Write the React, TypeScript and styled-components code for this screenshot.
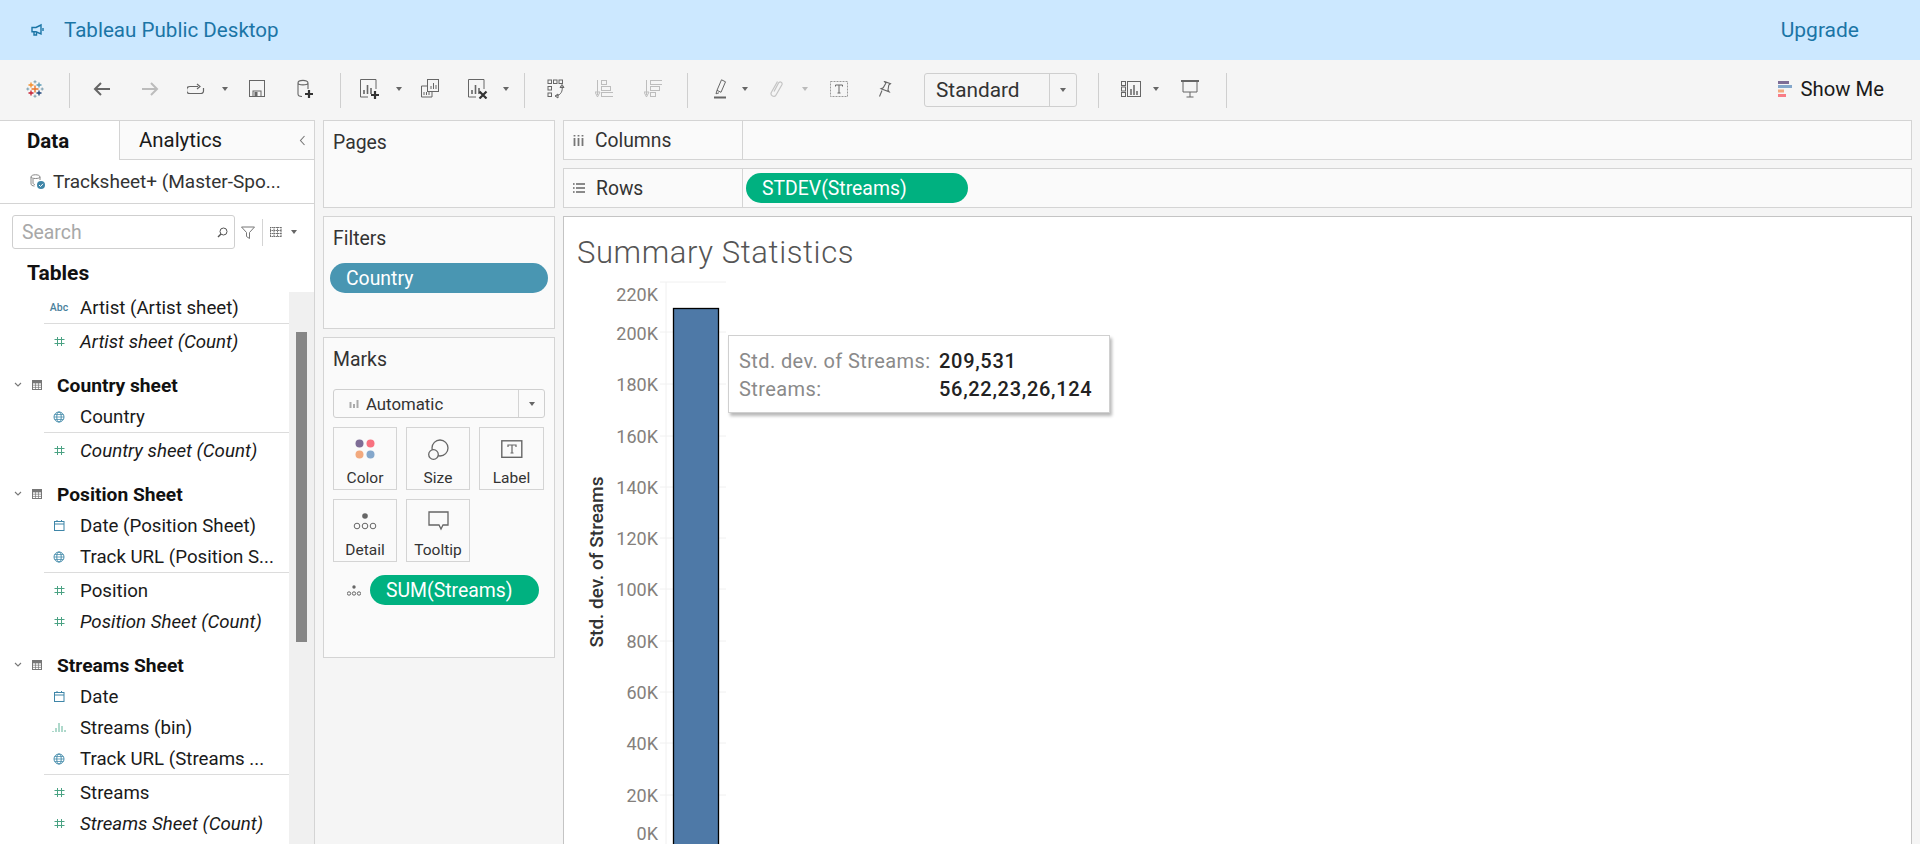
import React from "react";
import styled, { createGlobalStyle } from "styled-components";

const GlobalStyle = createGlobalStyle`
  html, body {
    margin: 0;
    padding: 0;
    background: #f5f5f5;
    font-family: Roboto, "Liberation Sans", sans-serif;
    color: #1a1a1a;
  }
  * { box-sizing: border-box; }
`;

const Page = styled.div`
  width: 1920px;
  height: 844px;
  overflow: hidden;
  display: flex;
  flex-direction: column;
`;

const Banner = styled.div`
  height: 60px;
  background: #cce8ff;
  display: flex;
  align-items: center;
  padding: 0 61px 0 31px;
  color: #1b75a6;
  font-size: 20.6px;
`;

const BannerTitle = styled.span`
  margin-left: 19px;
`;

const Upgrade = styled.span`
  margin-left: auto;
  font-size: 21px;
`;

const Toolbar = styled.div`
  height: 60px;
  background: #f5f5f5;
  display: flex;
  align-items: center;
  padding: 0 36px 0 0;
`;

const ToolSlot = styled.div<{ $ml: number; $w: number }>`
  margin-left: ${(p) => p.$ml}px;
  width: ${(p) => p.$w}px;
  display: flex;
  justify-content: center;
  align-items: center;
  margin-top: -3px;
`;

const ToolSep = styled.div<{ $ml: number }>`
  margin-left: ${(p) => p.$ml}px;
  width: 1px;
  height: 35px;
  background: #cfcfcf;
`;

const Caret = styled.div<{ $light?: boolean }>`
  width: 0;
  height: 0;
  border-left: 3.5px solid transparent;
  border-right: 3.5px solid transparent;
  border-top: 4px solid ${(p) => (p.$light ? "#bbb" : "#666")};
`;

const ModeSelect = styled.div`
  margin-left: 32px;
  width: 153px;
  height: 34px;
  border: 1px solid #cfcfcf;
  border-radius: 3px;
  display: flex;
  align-items: center;
  font-size: 20.8px;
  margin-top: -1px;
`;

const ModeText = styled.span`
  flex: 1;
  padding-left: 11px;
  color: #333;
`;

const ModeArrow = styled.div`
  width: 27px;
  height: 100%;
  border-left: 1px solid #cfcfcf;
  display: flex;
  align-items: center;
  justify-content: center;
`;

const ShowMe = styled.div`
  margin-left: auto;
  display: flex;
  align-items: center;
  gap: 8px;
  font-size: 20.3px;
  margin-top: -3px;
`;

const Body = styled.div`
  flex: 1;
  display: flex;
  min-height: 0;
`;

const Sidebar = styled.div`
  width: 315px;
  background: #fff;
  border-top: 1px solid #d4d4d4;
  border-right: 1px solid #d4d4d4;
  display: flex;
  flex-direction: column;
`;

const Tabs = styled.div`
  height: 39px;
  display: flex;
  align-items: center;
  flex-shrink: 0;
`;

const DataTab = styled.div`
  width: 119px;
  height: 100%;
  padding-left: 27px;
  display: flex;
  align-items: center;
  font-size: 20.5px;
  font-weight: 700;
  color: #111;
`;

const AnalyticsTab = styled.div`
  flex: 1;
  height: 100%;
  padding-left: 19px;
  display: flex;
  align-items: center;
  justify-content: space-between;
  padding-right: 8px;
  font-size: 20.4px;
  background: #fafafa;
  border-left: 1px solid #d4d4d4;
  border-bottom: 1px solid #d4d4d4;
`;

const SourceRow = styled.div`
  height: 44px;
  border-bottom: 1px solid #d4d4d4;
  display: flex;
  align-items: center;
  padding-left: 29px;
  gap: 7px;
  font-size: 19px;
  color: #333;
  flex-shrink: 0;
`;

const SearchRow = styled.div`
  height: 52px;
  padding: 4px 0 0 12px;
  display: flex;
  align-items: center;
  flex-shrink: 0;
`;

const SearchBox = styled.div`
  width: 223px;
  height: 34px;
  border: 1px solid #cfcfcf;
  border-radius: 3px;
  display: flex;
  align-items: center;
  justify-content: space-between;
  padding: 0 6px 0 9px;
  color: #a8a8a8;
  font-size: 19.4px;
`;

const SearchTools = styled.div`
  display: flex;
  align-items: center;
  margin-left: 6px;
`;

const ToolDivider = styled.div`
  width: 1px;
  height: 27px;
  background: #d4d4d4;
  margin: 0 7px;
`;

const SearchCaret = styled(Caret)`
  margin-left: 9px;
`;

const TablesTitle = styled.div`
  height: 36px;
  padding: 5px 0 0 27px;
  font-size: 21px;
  font-weight: 700;
  color: #111;
  flex-shrink: 0;
`;

const ListArea = styled.div`
  flex: 1;
  display: flex;
  min-height: 0;
  overflow: hidden;
`;

const FieldList = styled.div`
  width: 289px;
  padding-left: 44px;
  flex-shrink: 0;
`;

const Group = styled.div`
  margin-bottom: 12px;
`;

const GroupHead = styled.div`
  height: 32px;
  margin-left: -44px;
  padding-left: 14px;
  display: flex;
  align-items: center;
  font-size: 19.2px;
  font-weight: 700;
  color: #111;
`;

const GroupGlyph = styled.div`
  margin-left: 10px;
  display: flex;
`;

const GroupName = styled.span`
  margin-left: 15px;
`;

const FieldRow = styled.div<{ $italic?: boolean }>`
  height: 31px;
  display: flex;
  align-items: center;
  font-size: 18.7px;
  font-style: ${(p) => (p.$italic ? "italic" : "normal")};
  white-space: nowrap;
`;

const FieldIcon = styled.div`
  width: 36px;
  display: flex;
  justify-content: center;
  padding-right: 6px;
  flex-shrink: 0;
`;

const AbcMark = styled.span`
  font-size: 10.5px;
  font-style: normal;
  font-weight: 500;
  color: #4a7f9c;
`;

const FieldDivider = styled.div`
  height: 1px;
  background: #dcdcdc;
  margin-bottom: 2px;
`;

const ScrollTrack = styled.div`
  width: 25px;
  background: #f0f0f0;
  padding: 40px 7px 0 7px;
`;

const ScrollThumb = styled.div`
  height: 310px;
  width: 11px;
  background: #868686;
`;

const ShelfColumn = styled.div`
  width: 232px;
  margin-left: 8px;
  display: flex;
  flex-direction: column;
  gap: 8px;
`;

const Card = styled.div<{ $h: number }>`
  height: ${(p) => p.$h}px;
  background: #fafafa;
  border: 1px solid #d4d4d4;
  padding: 0 9px;
`;

const CardTitle = styled.div`
  height: 43px;
  display: flex;
  align-items: center;
  font-size: 19.4px;
  color: #333;
`;

const Pill = styled.div<{ $bg: string; $w: number }>`
  width: ${(p) => p.$w}px;
  height: 30px;
  border-radius: 15px;
  background: ${(p) => p.$bg};
  color: #fff;
  font-size: 19.4px;
  display: flex;
  align-items: center;
  padding-left: 16px;
`;

const FilterPill = styled(Pill)`
  margin: 3px 0 0 -3px;
`;

const MarkSelect = styled.div`
  height: 29px;
  margin-top: 8px;
  border: 1px solid #cfcfcf;
  border-radius: 3px;
  display: flex;
  align-items: center;
  font-size: 16.8px;
  color: #333;
`;

const MarkSelectText = styled.div`
  flex: 1;
  display: flex;
  align-items: center;
  gap: 7px;
  padding-left: 15px;
`;

const MarkSelectArrow = styled.div`
  width: 26px;
  height: 100%;
  border-left: 1px solid #d4d4d4;
  display: flex;
  align-items: center;
  justify-content: center;
`;

const MarkGrid = styled.div`
  display: grid;
  grid-template-columns: 64px 64px 65px;
  gap: 9px;
  margin-top: 9px;
`;

const MarkButton = styled.div`
  height: 63px;
  border: 1px solid #d4d4d4;
  display: flex;
  flex-direction: column;
  align-items: center;
  justify-content: flex-end;
  padding-bottom: 2px;
  font-size: 15.5px;
  line-height: 17px;
  color: #333;
`;

const MarkGlyph = styled.div`
  height: 30px;
  margin-bottom: 6px;
  display: flex;
  align-items: center;
`;

const EncodingRow = styled.div`
  display: flex;
  align-items: center;
  margin-top: 13px;
  padding-left: 14px;
  gap: 9px;
`;

const Main = styled.div`
  width: 1349px;
  margin-left: 8px;
  display: flex;
  flex-direction: column;
  gap: 8px;
`;

const Shelf = styled.div`
  height: 40px;
  background: #fafafa;
  border: 1px solid #d4d4d4;
  display: flex;
  flex-shrink: 0;
`;

const ShelfLabel = styled.div`
  width: 179px;
  border-right: 1px solid #d4d4d4;
  display: flex;
  align-items: center;
  padding-left: 9px;
  gap: 11px;
  font-size: 19.3px;
  color: #333;
`;

const ShelfBody = styled.div`
  flex: 1;
  display: flex;
  align-items: center;
  padding-left: 3px;
`;

const Viz = styled.div`
  flex: 1;
  position: relative;
  background: #fff;
  border: 1px solid #c4c4c4;
  border-bottom: none;
  overflow: hidden;
`;

const VizTitle = styled.div`
  height: 53px;
  padding: 18px 0 0 13px;
  font-size: 31px;
  font-weight: 300;
  letter-spacing: 0.6px;
  line-height: 35px;
  color: #555;
`;

const TickLabel = styled.text`
  font-size: 18px;
  fill: #84807c;
  text-anchor: end;
`;

const AxisTitle = styled.text`
  font-size: 19px;
  font-weight: 500;
  fill: #333;
  text-anchor: middle;
`;

const Tip = styled.div`
  position: absolute;
  left: 164px;
  top: 118px;
  width: 382px;
  height: 78px;
  background: #fff;
  border: 1px solid #d0d0d0;
  box-shadow: 2px 3px 3px rgba(0, 0, 0, 0.28);
  padding: 11px 0 0 10px;
  display: grid;
  grid-template-columns: 200px 1fr;
  grid-auto-rows: 28px;
  align-items: center;
  font-size: 20px;
`;

const TipKey = styled.span`
  color: #8a8a8a;
  letter-spacing: 0.4px;
  white-space: nowrap;
`;

const TipValue = styled.span`
  color: #222;
  font-weight: 500;
  letter-spacing: 0.7px;
`;

const G = "#666";

const Svg = ({ w, h, children }: { w: number; h: number; children: React.ReactNode }) => (
  <svg width={w} height={h} viewBox={`0 0 ${w} ${h}`} fill="none">
    {children}
  </svg>
);

const crossAt = (x: number, y: number, r: number, c: string, sw: number) => (
  <path key={`${x}-${y}`} d={`M${x - r} ${y}H${x + r}M${x} ${y - r}V${y + r}`} stroke={c} strokeWidth={sw} />
);

const Logo = () => (
  <Svg w={18} h={18}>
    {crossAt(9, 9, 3.5, "#e8762d", 1.4)}
    {crossAt(5, 5, 2.5, "#f28e2b", 1.3)}
    {crossAt(13, 5, 2.5, "#5b9ab5", 1.3)}
    {crossAt(5, 13, 2.5, "#c72035", 1.3)}
    {crossAt(13, 13, 2.5, "#1f447a", 1.3)}
    {crossAt(9, 1.8, 1.5, "#7b9fb0", 1)}
    {crossAt(9, 16.2, 1.5, "#7b9fb0", 1)}
    {crossAt(1.8, 9, 1.5, "#7b9fb0", 1)}
    {crossAt(16.2, 9, 1.5, "#7b9fb0", 1)}
  </Svg>
);

const Megaphone = () => (
  <Svg w={14} h={14}>
    <path d="M1 4.500h4L10 2v9L5 8.800H1z M3 9v3h2.500V9 M12 5v3" stroke="#1b75a6" strokeWidth="1.400" />
  </Svg>
);

const Arrow = ({ dir, c }: { dir: "l" | "r"; c: string }) => (
  <Svg w={18} h={16}>
    {dir === "l" ? (
      <path d="M17 8H2M8 2L2 8l6 6" stroke={c} strokeWidth="2" />
    ) : (
      <path d="M1 8h15M10 2l6 6-6 6" stroke={c} strokeWidth="2" />
    )}
  </Svg>
);

const Loop = () => (
  <Svg w={18} h={12}>
    <path d="M5 3.500H3a2.500 2.500 0 0 0 0 7h11a2.500 2.500 0 0 0 2.500-2.500V5" stroke={G} strokeWidth="1.200" />
    <path d="M5 3.500h6M10 1l3 2.500-3 2.500" stroke={G} strokeWidth="1.200" />
  </Svg>
);

const Save = () => (
  <Svg w={16} h={17}>
    <rect x=".5" y=".5" width="15" height="16" stroke={G} />
    <rect x="4" y="11" width="8" height="5.500" stroke={G} />
    <rect x="5.500" y="12" width="3" height="4" fill={G} />
  </Svg>
);

const AddData = () => (
  <Svg w={16} h={20}>
    <path d="M1 4v11c0 1.500 2 2.500 4 2.500M1 4c0-3.500 10-3.500 10 0M11 4v6M1 4c0 2.500 10 2.500 10 0" stroke={G} strokeWidth="1.100" />
    <path d="M12 11v8M8 15h8" stroke="#333" strokeWidth="2.200" />
  </Svg>
);

const SheetBars = ({ mark }: { mark: "plus" | "x" }) => (
  <Svg w={20} h={20}>
    <path d="M16 10V.5H.5V18H8" stroke={G} />
    <path d="M4 15v-4M7.500 15V6M11 15V9" stroke={G} strokeWidth="1.600" />
    {mark === "plus" ? (
      <path d="M15 12v8M11 16h8" stroke="#333" strokeWidth="2.200" />
    ) : (
      <path d="M11.500 12.500l7 7M18.500 12.500l-7 7" stroke="#333" strokeWidth="2.200" />
    )}
  </Svg>
);

const Duplicate = () => (
  <Svg w={18} h={20}>
    <rect x="6.500" y=".5" width="11" height="12" fill="#f5f5f5" stroke={G} />
    <path d="M10 10V7M12.500 10V4M15 10V6" stroke={G} />
    <path d="M6 7H.5v11H11v-5" stroke={G} />
    <path d="M3 16v-3M5.500 16v-3M8 16v-3" stroke={G} />
  </Svg>
);

const SwapAxes = () => (
  <Svg w={18} h={20}>
    {[1, 6.500, 12].map((x) => (
      <rect key={x} x={x} y="1" width="3.500" height="3.500" stroke={G} />
    ))}
    <rect x="1" y="7.500" width="3.500" height="3.500" stroke={G} />
    <rect x="1" y="14" width="3.500" height="3.500" stroke={G} />
    <path d="M15 7c1 5-1 9-6 10M15 5.500l-2 3h4zM8 17l3-2v4z" stroke={G} />
  </Svg>
);

const Sort = ({ desc }: { desc?: boolean }) => {
  const c = "#bdbdbd";
  const widths = desc ? [12, 9, 5] : [5, 9, 12];
  return (
    <Svg w={18} h={20}>
      <path d="M2.500 1v15M0 13l2.500 5L5 13z" stroke={c} />
      {widths.map((w, i) => (
        <rect key={i} x="6.500" y={1.500 + i * 6} width={w} height="4" stroke={c} />
      ))}
    </Svg>
  );
};

const Highlighter = () => (
  <Svg w={14} h={20}>
    <path d="M8.500.8l4 2-4.500 10.500-4-2zM4 11.300l-1 3.500 3-1" stroke={G} />
    <rect x="1" y="17.500" width="12" height="2" fill={G} />
  </Svg>
);

const Clip = () => (
  <Svg w={14} h={17}>
    <path d="M4 11.500l4.500-8.500a1.900 1.900 0 0 1 3.400 1.800l-5.700 10a2.700 2.700 0 0 1-4.800-2.500L7.500 1.500" stroke="#c4c4c4" strokeWidth="1.200" />
  </Svg>
);

const TextBox = () => (
  <Svg w={18} h={16}>
    <rect x=".5" y=".5" width="17" height="15" stroke="#999" strokeDasharray="2 1" />
    <path d="M5.500 5.500V4h7v1.500M9 4v8M7.500 12h3" stroke={G} />
  </Svg>
);

const Pin = () => (
  <Svg w={14} h={16}>
    <path d="M6.500.5l6 2.200-1.700 1.300-.8 5 1.200 1.800-8.200-3 2.200-1 2.600-4.500zM4 9.500L1.500 15.500" stroke={G} strokeWidth="1.100" />
  </Svg>
);

const ShowMeSmall = () => (
  <Svg w={20} h={16}>
    {[0.5, 6, 11.500].map((y) => (
      <rect key={y} x=".5" y={y} width="4" height="4" stroke={G} />
    ))}
    <rect x="6.500" y=".5" width="13" height="15" stroke={G} />
    <path d="M10 14V8M13 14V4M16 14V10" stroke={G} strokeWidth="1.500" />
  </Svg>
);

const Present = () => (
  <Svg w={18} h={18}>
    <rect x="0" y="0" width="18" height="2" fill={G} />
    <path d="M2 2v10h14V2M9 12v5M5.500 17h7" stroke={G} />
  </Svg>
);

const ShowMeIcon = () => (
  <Svg w={14} h={16}>
    <rect x="0" y="0" width="11" height="3" fill="#7e6d96" />
    <rect x="0" y="4" width="14" height="3" fill="#84a7cb" />
    <rect x="0" y="8.500" width="6" height="3" fill="#f2a97e" />
    <rect x="0" y="13" width="8" height="3" fill="#f87c86" />
  </Svg>
);

const Hash = () => (
  <Svg w={11} h={11}>
    <path d="M3.500 1v9M7.500 1v9M.5 3.500h10M.5 7.500h10" stroke="#4aa283" />
  </Svg>
);

const Globe = () => (
  <Svg w={12} h={12}>
    <circle cx="6" cy="6" r="5" stroke="#4a8fad" />
    <ellipse cx="6" cy="6" rx="2.200" ry="5" stroke="#4a8fad" />
    <path d="M1 6h10M1.800 3.500h8.400M1.800 8.500h8.400" stroke="#4a8fad" strokeWidth=".8" />
  </Svg>
);

const Calendar = () => (
  <Svg w={11} h={11}>
    <rect x=".5" y="1.500" width="9.500" height="9" stroke="#3f86a8" />
    <path d="M.5 4h9.500M3 0v2M7.500 0v2" stroke="#3f86a8" />
  </Svg>
);

const BinBars = () => (
  <Svg w={15} h={11}>
    <path d="M1 10V9M4 10V6M7 10V1M10 10V4M13 10V8" stroke="#5fb398" />
  </Svg>
);

const TableGlyph = () => (
  <Svg w={10} h={10}>
    <rect x=".5" y=".5" width="9" height="9" stroke="#777" />
    <path d="M.5 3h9M.5 5.200h9M.5 7.400h9M3.500 3v6.500M6.500 3v6.500" stroke="#777" strokeWidth=".7" />
    <rect x=".5" y=".5" width="9" height="2.500" fill="#777" />
  </Svg>
);

const Chevron = () => (
  <Svg w={8} h={6}>
    <path d="M1 1l3 3 3-3" stroke="#777" strokeWidth="1.100" />
  </Svg>
);

const SourceIcon = () => (
  <Svg w={17} h={17}>
    <path d="M2 4v7c0 1 1.500 2 3.500 2M2 4c0-3 9-3 9 0v3M2 4c0 2 9 2 9 0M4 6v4c0 1 1 1.500 2 1.500" stroke="#888" />
    <circle cx="12" cy="12" r="4" fill="#3f86a8" />
    <path d="M10 12l1.500 1.500L14 10.800" stroke="#fff" />
  </Svg>
);

const Magnifier = () => (
  <Svg w={11} h={11}>
    <circle cx="6.500" cy="4.500" r="3.500" stroke="#555" />
    <path d="M4 7L1 10" stroke="#555" strokeWidth="1.400" />
  </Svg>
);

const Funnel = () => (
  <Svg w={14} h={13}>
    <path d="M.5 1h13L8.500 6.500v6l-3-2V6.500z" stroke="#777" />
  </Svg>
);

const GridGlyph = () => (
  <Svg w={12} h={10}>
    <path d="M0 .5h12M0 3.500h12M0 6.500h12M0 9.500h12M.5 0v10M4 0v10M7.500 0v10M11 0v10" stroke="#666" strokeDasharray="1.500 .5" strokeWidth=".9" />
  </Svg>
);

const BackChevron = () => (
  <Svg w={7} h={11}>
    <path d="M5.500 1L1.500 5.500l4 4.500" stroke="#777" strokeWidth="1.100" />
  </Svg>
);

const ColumnsGlyph = () => (
  <Svg w={11} h={11}>
    <path d="M1.500 3v8M5.500 3v8M9.500 3v8" stroke="#777" strokeWidth="1.800" />
    <path d="M1.500 0v1.500M5.500 0v1.500M9.500 0v1.500" stroke="#777" strokeWidth="1.800" />
  </Svg>
);

const RowsGlyph = () => (
  <Svg w={12} h={10}>
    <path d="M3 1h9M3 5h9M3 9h9" stroke="#666" strokeWidth="1.300" />
    <path d="M0 1h1.600M0 5h1.600M0 9h1.600" stroke="#666" strokeWidth="1.500" />
  </Svg>
);

const ColorDots = () => (
  <Svg w={20} h={20}>
    <circle cx="4.500" cy="4.500" r="4" fill="#7e6d96" />
    <circle cx="15.500" cy="4.500" r="4" fill="#f8717f" />
    <circle cx="4.500" cy="15.500" r="4" fill="#f2a97e" />
    <circle cx="15.500" cy="15.500" r="4" fill="#84a7cb" />
  </Svg>
);

const SizeCircles = () => (
  <Svg w={22} h={21}>
    <circle cx="13" cy="9" r="8" stroke={G} strokeWidth="1.300" />
    <circle cx="6.500" cy="15.500" r="4.800" fill="#fafafa" stroke={G} strokeWidth="1.300" />
  </Svg>
);

const LabelGlyph = () => (
  <Svg w={22} h={18}>
    <rect x=".8" y=".8" width="20" height="16.500" stroke={G} strokeWidth="1.400" />
    <path d="M7 7V5h8v2M11 5v8M9.500 13h3" stroke={G} strokeWidth="1.200" />
  </Svg>
);

const DetailGlyph = ({ small }: { small?: boolean }) => {
  const s = small ? 14 : 24;
  const r = small ? 1.700 : 2.800;
  const d = small ? 5 : 8;
  return (
    <Svg w={s} h={small ? 11 : 17}>
      <circle cx={s / 2} cy={small ? 2 : 3} r={r} fill={G} />
      {[-d, 0, d].map((o) => (
        <circle key={o} cx={s / 2 + o} cy={small ? 8.500 : 13} r={r} stroke={G} />
      ))}
    </Svg>
  );
};

const TooltipGlyph = () => (
  <Svg w={21} h={20}>
    <path d="M1 1h19v13h-5l-2 4-2-4H1z" stroke={G} strokeWidth="1.300" />
  </Svg>
);

const AutoBars = () => (
  <Svg w={10} h={9}>
    <path d="M1.500 3v6M5 5v4M8.500 1v8" stroke="#aaa" strokeWidth="2" />
  </Svg>
);

type Tool = { ml: number; w?: number; icon?: React.ReactNode };

const tools: Tool[] = [
  { ml: 26, w: 18, icon: <Logo /> },
  { ml: 25 },
  { ml: 23, w: 18, icon: <Arrow dir="l" c={G} /> },
  { ml: 30, w: 18, icon: <Arrow dir="r" c="#bcbcbc" /> },
  { ml: 28, w: 18, icon: <Loop /> },
  { ml: 16, w: 8, icon: <Caret /> },
  { ml: 20, w: 16, icon: <Save /> },
  { ml: 32, w: 16, icon: <AddData /> },
  { ml: 27 },
  { ml: 19, w: 20, icon: <SheetBars mark="plus" /> },
  { ml: 15, w: 8, icon: <Caret /> },
  { ml: 18, w: 18, icon: <Duplicate /> },
  { ml: 29, w: 20, icon: <SheetBars mark="x" /> },
  { ml: 14, w: 8, icon: <Caret /> },
  { ml: 14 },
  { ml: 22, w: 18, icon: <SwapAxes /> },
  { ml: 30, w: 18, icon: <Sort /> },
  { ml: 31, w: 18, icon: <Sort desc /> },
  { ml: 25 },
  { ml: 25, w: 14, icon: <Highlighter /> },
  { ml: 14, w: 8, icon: <Caret /> },
  { ml: 21, w: 14, icon: <Clip /> },
  { ml: 17, w: 8, icon: <Caret $light /> },
  { ml: 21, w: 18, icon: <TextBox /> },
  { ml: 30, w: 14, icon: <Pin /> },
];

const toolsAfter: Tool[] = [
  { ml: 21 },
  { ml: 22, w: 20, icon: <ShowMeSmall /> },
  { ml: 11, w: 8, icon: <Caret /> },
  { ml: 21, w: 18, icon: <Present /> },
  { ml: 27 },
];

const renderTool = (t: Tool, i: number) =>
  t.w ? (
    <ToolSlot key={i} $ml={t.ml} $w={t.w}>
      {t.icon}
    </ToolSlot>
  ) : (
    <ToolSep key={i} $ml={t.ml} />
  );

type Kind = "abc" | "hash" | "globe" | "date" | "bin";

type Field = { name: string; kind: Kind; italic?: boolean; divider?: boolean };

const glyphs: Record<Kind, React.ReactNode> = {
  abc: <AbcMark>Abc</AbcMark>,
  hash: <Hash />,
  globe: <Globe />,
  date: <Calendar />,
  bin: <BinBars />,
};

const groups: { title?: string; fields: Field[] }[] = [
  {
    fields: [
      { name: "Artist (Artist sheet)", kind: "abc", divider: true },
      { name: "Artist sheet (Count)", kind: "hash", italic: true },
    ],
  },
  {
    title: "Country sheet",
    fields: [
      { name: "Country", kind: "globe", divider: true },
      { name: "Country sheet (Count)", kind: "hash", italic: true },
    ],
  },
  {
    title: "Position Sheet",
    fields: [
      { name: "Date (Position Sheet)", kind: "date" },
      { name: "Track URL (Position S...", kind: "globe", divider: true },
      { name: "Position", kind: "hash" },
      { name: "Position Sheet (Count)", kind: "hash", italic: true },
    ],
  },
  {
    title: "Streams Sheet",
    fields: [
      { name: "Date", kind: "date" },
      { name: "Streams (bin)", kind: "bin" },
      { name: "Track URL (Streams ...", kind: "globe", divider: true },
      { name: "Streams", kind: "hash" },
      { name: "Streams Sheet (Count)", kind: "hash", italic: true },
    ],
  },
];

const ticks = [
  { label: "220K", labelY: 294, grid: 282 },
  { label: "200K", labelY: 333, grid: 332 },
  { label: "180K", labelY: 384, grid: 384 },
  { label: "160K", labelY: 436, grid: 436 },
  { label: "140K", labelY: 487, grid: 487 },
  { label: "120K", labelY: 538, grid: 538 },
  { label: "100K", labelY: 589, grid: 589 },
  { label: "80K", labelY: 641, grid: 641 },
  { label: "60K", labelY: 692, grid: 692 },
  { label: "40K", labelY: 743, grid: 743 },
  { label: "20K", labelY: 795, grid: 795 },
  { label: "0K", labelY: 833, grid: 846 },
];

const Chart = () => (
  <svg width={400} height={574} viewBox="564 270 400 574" style={{ display: "block" }}>
    <path d="M666 282V844" stroke="#f0f0f0" />
    {ticks.map((t) => (
      <path key={t.label} d={`M660 ${t.grid}H726`} stroke="#f0f0f0" />
    ))}
    {ticks.map((t) => (
      <TickLabel key={t.label} x={658} y={t.labelY + 7}>
        {t.label}
      </TickLabel>
    ))}
    <rect x="673.500" y="308.500" width="45" height="540" fill="#4e79a7" stroke="#000" strokeWidth="1.300" />
    <AxisTitle transform="translate(603 562) rotate(-90)">Std. dev. of Streams</AxisTitle>
  </svg>
);

export default function App() {
  return (
    <Page>
      <GlobalStyle />
      <Banner>
        <Megaphone />
        <BannerTitle>Tableau Public Desktop</BannerTitle>
        <Upgrade>Upgrade</Upgrade>
      </Banner>
      <Toolbar>
        {tools.map(renderTool)}
        <ModeSelect>
          <ModeText>Standard</ModeText>
          <ModeArrow>
            <Caret />
          </ModeArrow>
        </ModeSelect>
        {toolsAfter.map(renderTool)}
        <ShowMe>
          <ShowMeIcon />
          Show Me
        </ShowMe>
      </Toolbar>
      <Body>
        <Sidebar>
          <Tabs>
            <DataTab>Data</DataTab>
            <AnalyticsTab>
              Analytics
              <BackChevron />
            </AnalyticsTab>
          </Tabs>
          <SourceRow>
            <SourceIcon />
            Tracksheet+ (Master-Spo...
          </SourceRow>
          <SearchRow>
            <SearchBox>
              Search
              <Magnifier />
            </SearchBox>
            <SearchTools>
              <Funnel />
              <ToolDivider />
              <GridGlyph />
              <SearchCaret />
            </SearchTools>
          </SearchRow>
          <TablesTitle>Tables</TablesTitle>
          <ListArea>
            <FieldList>
              {groups.map((g, gi) => (
                <Group key={gi}>
                  {g.title && (
                    <GroupHead>
                      <Chevron />
                      <GroupGlyph>
                        <TableGlyph />
                      </GroupGlyph>
                      <GroupName>{g.title}</GroupName>
                    </GroupHead>
                  )}
                  {g.fields.map((f) => (
                    <React.Fragment key={f.name}>
                      <FieldRow $italic={f.italic}>
                        <FieldIcon>{glyphs[f.kind]}</FieldIcon>
                        {f.name}
                      </FieldRow>
                      {f.divider && <FieldDivider />}
                    </React.Fragment>
                  ))}
                </Group>
              ))}
            </FieldList>
            <ScrollTrack>
              <ScrollThumb />
            </ScrollTrack>
          </ListArea>
        </Sidebar>
        <ShelfColumn>
          <Card $h={88}>
            <CardTitle>Pages</CardTitle>
          </Card>
          <Card $h={113}>
            <CardTitle>Filters</CardTitle>
            <FilterPill $bg="#4996b2" $w={218}>
              Country
            </FilterPill>
          </Card>
          <Card $h={321}>
            <CardTitle>Marks</CardTitle>
            <MarkSelect>
              <MarkSelectText>
                <AutoBars />
                Automatic
              </MarkSelectText>
              <MarkSelectArrow>
                <Caret />
              </MarkSelectArrow>
            </MarkSelect>
            <MarkGrid>
              <MarkButton>
                <MarkGlyph>
                  <ColorDots />
                </MarkGlyph>
                Color
              </MarkButton>
              <MarkButton>
                <MarkGlyph>
                  <SizeCircles />
                </MarkGlyph>
                Size
              </MarkButton>
              <MarkButton>
                <MarkGlyph>
                  <LabelGlyph />
                </MarkGlyph>
                Label
              </MarkButton>
              <MarkButton>
                <MarkGlyph>
                  <DetailGlyph />
                </MarkGlyph>
                Detail
              </MarkButton>
              <MarkButton>
                <MarkGlyph>
                  <TooltipGlyph />
                </MarkGlyph>
                Tooltip
              </MarkButton>
            </MarkGrid>
            <EncodingRow>
              <DetailGlyph small />
              <Pill $bg="#00b180" $w={169}>
                SUM(Streams)
              </Pill>
            </EncodingRow>
          </Card>
        </ShelfColumn>
        <Main>
          <Shelf>
            <ShelfLabel>
              <ColumnsGlyph />
              Columns
            </ShelfLabel>
            <ShelfBody />
          </Shelf>
          <Shelf>
            <ShelfLabel>
              <RowsGlyph />
              Rows
            </ShelfLabel>
            <ShelfBody>
              <Pill $bg="#00b180" $w={222}>
                STDEV(Streams)
              </Pill>
            </ShelfBody>
          </Shelf>
          <Viz>
            <VizTitle>Summary Statistics</VizTitle>
            <Chart />
            <Tip>
              <TipKey>Std. dev. of Streams:</TipKey>
              <TipValue>209,531</TipValue>
              <TipKey>Streams:</TipKey>
              <TipValue>56,22,23,26,124</TipValue>
            </Tip>
          </Viz>
        </Main>
      </Body>
    </Page>
  );
}
